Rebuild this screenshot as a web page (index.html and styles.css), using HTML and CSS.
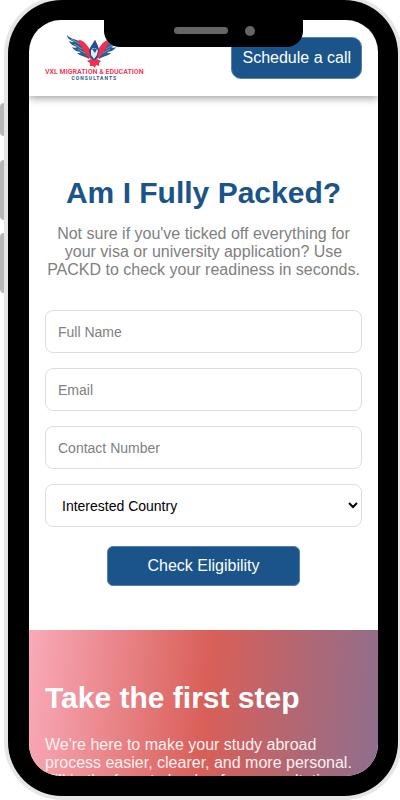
FILE: index.html
```html
<!DOCTYPE html>
<html lang="en">
<head>
    <meta charset="UTF-8">
    <meta name="viewport" content="width=device-width, initial-scale=1.0">
    <title>VXL Migration &amp; Education Consultants</title>
    <link rel="stylesheet" href="styles.css">
</head>
<body>
    <div class="side-keys">
        <span class="key key-small"></span>
        <span class="key"></span>
        <span class="key"></span>
    </div>

    <div class="phone">
        <div class="notch">
            <span class="speaker"></span>
            <span class="camera"></span>
        </div>

        <div class="screen">
            <header class="header">
                <a href="#" class="logo">
                    <svg class="bird" viewBox="0 0 54 34" aria-hidden="true">
                        <path fill="#2c5f8e" d="M0 0C3 4 9 4 14 7L24 18L22 24C17 21 13 21 10 18C12 18 13 18 14 17C9 17 6 14 5 12C7 13 9 13 10 12C6 11 3 9 2 6C4 7 6 7 7 7C3 5 0 3 0 0Z"/>
                        <path fill="#2c5f8e" d="M54 0C51 4 45 4 40 7L30 18L32 24C37 21 41 21 44 18C42 18 41 18 40 17C45 17 48 14 49 12C47 13 45 13 44 12C48 11 51 9 52 6C50 7 48 7 47 7C51 5 54 3 54 0Z"/>
                        <path fill="none" stroke="#8fb3cf" stroke-width="0.7" d="M4 4L13 9M7 9L15 14M11 14L18 18M50 4L41 9M47 9L39 14M43 14L36 18"/>
                        <path fill="#f0304f" d="M12 5C17 5 20 10 24 16L24 24C20 22 17 17 15 13C14 10 10 8 12 5ZM42 5C37 5 34 10 30 16L30 24C34 22 37 17 39 13C40 10 44 8 42 5Z"/>
                        <path fill="#1f4f80" d="M22 15L24 11L28 5L31 11L32 15L31 21L29 25H25L23 21Z"/>
                        <path fill="#dfeaf2" d="M24 15L27 12L31 15L30 20L27 24L24 20Z"/>
                        <path fill="#24558a" d="M25 14H30L28 18Z"/>
                        <path fill="#2949a0" d="M28 5L31 12L27 14L25 11Z"/>
                        <path fill="#f0304f" d="M24 24L27 25L30 24L34 26L32 28L32 31L29 30L28 33L26 31L23 31V28L20 26Z"/>
                    </svg>
                    <span class="logo-name">VXL MIGRATION &amp; EDUCATION</span>
                    <span class="logo-sub">CONSULTANTS</span>
                </a>
                <button type="button" class="call-btn">Schedule a call</button>
            </header>

            <main>
                <section class="packed">
                    <h1>Am I Fully Packed?</h1>
                    <p>Not sure if you've ticked off everything for your visa or university application? Use PACKD to check your readiness in seconds.</p>

                    <form class="packed-form">
                        <input type="text" name="name" placeholder="Full Name" aria-label="Full Name">
                        <input type="email" name="email" placeholder="Email" aria-label="Email">
                        <input type="tel" name="phone" placeholder="Contact Number" aria-label="Contact Number">
                        <select name="country" aria-label="Interested Country">
                            <option>Interested Country</option>
                        </select>
                        <button type="submit" class="submit-btn">Check Eligibility</button>
                    </form>
                </section>

                <section class="first-step">
                    <h2>Take the first step</h2>
                    <p>We're here to make your study abroad process easier, clearer, and more personal. Fill in the form to book a free consultation</p>
                </section>
            </main>
        </div>
    </div>
</body>
</html>
```

FILE: styles.css
```css
* {
    box-sizing: border-box;
}
body {
    margin: 0;
    height: 100vh;
    display: flex;
    background-color: #ffffff;
    font-family: "Liberation Sans", Arial, sans-serif;
    overflow: hidden;
}
h1, h2, p {
    margin: 0;
}

/* Phone frame */
.side-keys {
    width: 4px;
    padding-top: 103px;
    display: flex;
    flex-direction: column;
    gap: 13px;
}
.key {
    height: 60px;
    background-color: #b8b8b8;
    border-radius: 4px 0 0 4px;
}
.key-small {
    height: 33px;
    margin-bottom: 11px;
}
.phone {
    position: relative;
    flex: 1;
    margin: 0 2px 4px 4px;
    padding: 20px 20px 20px 21px;
    background-color: #000000;
    border-radius: 54px;
    box-shadow: 0 0 0 4px #e6e6e6;
}
.notch {
    position: absolute;
    top: 19px;
    left: 96px;
    right: 95px;
    height: 28px;
    padding-left: 70px;
    display: flex;
    align-items: center;
    gap: 17px;
    background-color: #000000;
    border-radius: 0 0 16px 16px;
    z-index: 2;
}
.speaker {
    width: 54px;
    height: 7px;
    margin-bottom: 5px;
    background-color: #666666;
    border-radius: 4px;
}
.camera {
    width: 10px;
    height: 10px;
    margin-bottom: 5px;
    background-color: #666666;
    border-radius: 50%;
}
.screen {
    height: 100%;
    background-color: #ffffff;
    border-radius: 32px;
    overflow: hidden;
}

/* Header */
.header {
    position: relative;
    height: 76px;
    padding: 0 16px;
    display: flex;
    justify-content: space-between;
    align-items: center;
    box-shadow: 0 2px 8px rgba(0, 0, 0, 0.4);
}
.logo {
    display: flex;
    flex-direction: column;
    align-items: center;
    text-decoration: none;
    font-family: Roboto, sans-serif;
    font-weight: bold;
    line-height: 6px;
    white-space: nowrap;
}
.bird {
    width: 54px;
    height: 34px;
}
.logo-name {
    font-size: 7px;
    color: #f0405c;
}
.logo-sub {
    font-size: 5px;
    letter-spacing: 1px;
    color: #2a5b87;
}
.call-btn {
    padding: 11px 10px;
    border: 1px solid #5580a8;
    border-radius: 10px;
    background-color: #1a548a;
    color: #ffffff;
    font-family: inherit;
    font-size: 16px;
    line-height: 18px;
}

/* Checklist form */
.packed {
    padding: 79px 16px 44px;
    text-align: center;
}
.packed h1 {
    font-size: 30px;
    line-height: 35px;
    color: #1a548a;
}
.packed p {
    margin: 15px 0 31px;
    font-size: 16px;
    line-height: 18px;
    color: #808080;
}
.packed-form {
    display: flex;
    flex-direction: column;
    gap: 15px;
}
.packed-form input,
.packed-form select {
    width: 100%;
    height: 43px;
    padding: 0 12px;
    border: 1px solid #dddddd;
    border-radius: 8px;
    background-color: #ffffff;
    color: #000000;
    font-family: inherit;
    font-size: 14px;
}
.packed-form select {
    padding: 0 0 0 12px;
}
.packed-form input::placeholder {
    color: #808080;
}
.submit-btn {
    align-self: center;
    margin-top: 4px;
    padding: 10px 39px;
    border: 1px solid #5580a8;
    border-radius: 6px;
    background-color: #1a548a;
    color: #ffffff;
    font-family: inherit;
    font-size: 16px;
    line-height: 18px;
}

/* First step banner */
.first-step {
    padding: 50px 16px;
    background: linear-gradient(95deg, #f9aab9 0%, #d95f58 50%, #8c6f8f 100%);
    color: #ffffff;
}
.first-step h2 {
    font-size: 30px;
    line-height: 35px;
}
.first-step p {
    margin-top: 21px;
    font-size: 16px;
    line-height: 18px;
    color: #fdf0f0;
}
```
